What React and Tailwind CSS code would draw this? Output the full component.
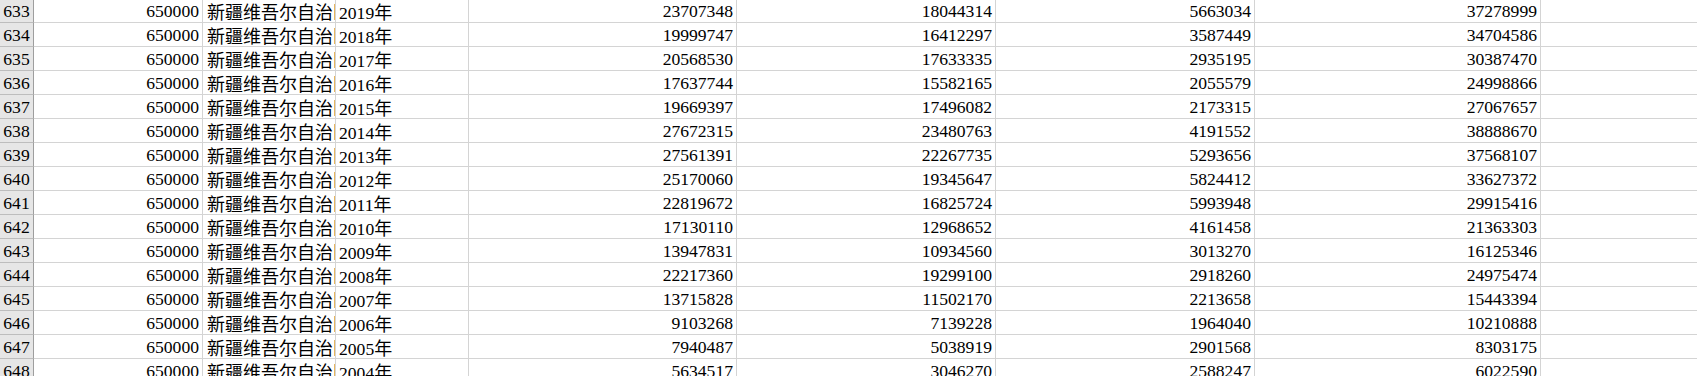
import React from "react";

const rows = [
  [633, 2019, 23707348, 18044314, 5663034, 37278999],
  [634, 2018, 19999747, 16412297, 3587449, 34704586],
  [635, 2017, 20568530, 17633335, 2935195, 30387470],
  [636, 2016, 17637744, 15582165, 2055579, 24998866],
  [637, 2015, 19669397, 17496082, 2173315, 27067657],
  [638, 2014, 27672315, 23480763, 4191552, 38888670],
  [639, 2013, 27561391, 22267735, 5293656, 37568107],
  [640, 2012, 25170060, 19345647, 5824412, 33627372],
  [641, 2011, 22819672, 16825724, 5993948, 29915416],
  [642, 2010, 17130110, 12968652, 4161458, 21363303],
  [643, 2009, 13947831, 10934560, 3013270, 16125346],
  [644, 2008, 22217360, 19299100, 2918260, 24975474],
  [645, 2007, 13715828, 11502170, 2213658, 15443394],
  [646, 2006, 9103268, 7139228, 1964040, 10210888],
  [647, 2005, 7940487, 5038919, 2901568, 8303175],
  [648, 2004, 5634517, 3046270, 2588247, 6022590],
];

const cell =
  "h-[24px] shrink-0 border-b border-r border-[#d4d4d4] overflow-hidden whitespace-nowrap pt-[2px] leading-[21px]";

export default function App() {
  return (
    <div
      className="w-[1697px] h-[376px] overflow-hidden bg-white text-black text-[17.6px]"
      style={{ fontFamily: '"Liberation Serif", "Noto Sans CJK SC", serif' }}
    >
      <div className="-mt-px flex flex-col">
        {rows.map((r) => (
          <div key={r[0]} className="flex">
            <div className="h-[24px] w-[34px] shrink-0 border-b border-r border-b-[#bdbdbd] border-r-[#9e9e9e] bg-[#e6e6e6] text-center pt-[2px] leading-[21px]">
              {r[0]}
            </div>
            <div className={`${cell} w-[169px] text-right pr-[3px]`}>650000</div>
            <div
              className={`${cell} w-[133px] pl-[4px] text-[18px]`}
              style={{ fontFamily: '"Noto Sans CJK SC", sans-serif' }}
            >
              新疆维吾尔自治区
            </div>
            <div className={`${cell} w-[133px] pl-[3px]`}>
              {r[1]}
              <span className="text-[18px]" style={{ fontFamily: '"Noto Sans CJK SC", sans-serif' }}>年</span>
            </div>
            <div className={`${cell} w-[268px] text-right pr-[3px]`}>{r[2]}</div>
            <div className={`${cell} w-[259px] text-right pr-[3px]`}>{r[3]}</div>
            <div className={`${cell} w-[259px] text-right pr-[3px]`}>{r[4]}</div>
            <div className={`${cell} w-[286px] text-right pr-[3px]`}>{r[5]}</div>
            <div className="h-[24px] flex-1 border-b border-[#d4d4d4]"></div>
          </div>
        ))}
      </div>
    </div>
  );
}
